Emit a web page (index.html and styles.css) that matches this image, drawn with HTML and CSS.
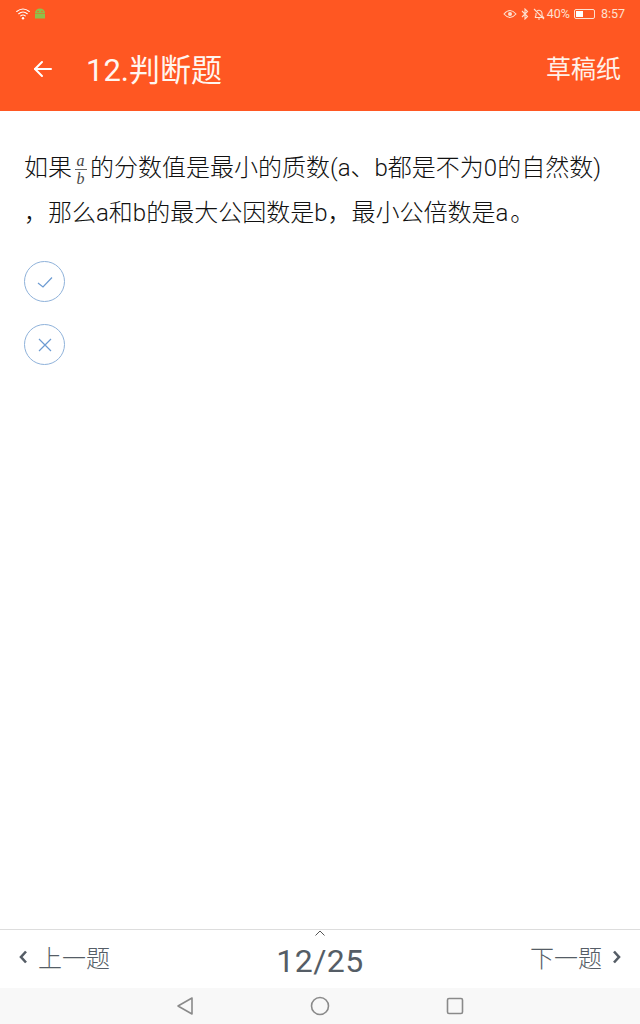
FILE: index.html
```html
<!DOCTYPE html>
<html lang="zh">
<head>
<meta charset="utf-8">
<title>12.判断题</title>
<link rel="stylesheet" href="styles.css">
</head>
<body>
<div class="page">
  <header class="top">
    <div class="status">
      <div class="status-left">
        <svg class="wifi" width="14" height="12" viewBox="0 0 14 12" fill="none" stroke="#fff" stroke-width="1.100" stroke-linecap="round"><path d="M.7 3.500 Q7 -1.500 13.300 3.500"/><path d="M2.700 5.700 Q7 2.400 11.300 5.700"/><path d="M4.700 7.900 Q7 6.200 9.300 7.900"/><circle cx="7" cy="10.200" r="1.200" fill="#fff" stroke="none"/></svg>
        <svg class="droid" width="12" height="12" viewBox="0 0 12 12"><path d="M1 5 A5 4.500 0 0 1 11 5 V10.500 H1Z" fill="#8fc04a"/><path d="M1 5.500 H11" stroke="#ff5722" stroke-width=".5"/><circle cx="4" cy="3.500" r=".7" fill="#ff5722"/><circle cx="8" cy="3.500" r=".7" fill="#ff5722"/></svg>
      </div>
      <div class="status-right">
        <svg width="14" height="10" viewBox="0 0 14 10" fill="none" stroke="#fde0d0" stroke-width="1.100"><path d="M1 5 Q7 -2 13 5 Q7 12 1 5Z"/><circle cx="7" cy="5" r="2" fill="#fde0d0" stroke="none"/></svg>
        <svg width="8" height="12" viewBox="0 0 8 12" fill="none" stroke="#fde0d0" stroke-width="1.100"><path d="M1 3 L6.500 8.500 L4 11 V1 L6.500 3.500 L1 9"/></svg>
        <svg width="12" height="12" viewBox="0 0 12 12" fill="none" stroke="#fde0d0" stroke-width="1.100"><path d="M2 9.500 H10.500 L9 7.500 V5 A3 3 0 0 0 4 3"/><path d="M3 5 V7.500 L2 9.500"/><path d="M5 11 H7"/><path d="M1 1 L11 11"/></svg>
        <span class="pct">40%</span>
        <span class="battery"><span class="battery-fill"></span></span>
        <span class="clock">8:57</span>
      </div>
    </div>
    <div class="appbar">
      <svg class="back" width="20" height="18" viewBox="0 0 20 18" fill="none" stroke="#fff" stroke-width="2" stroke-linecap="round" stroke-linejoin="round"><path d="M18 9 H2"/><path d="M9 2 L2 9 L9 16"/></svg>
      <h1 class="title">12.判断题</h1>
      <span class="draft">草稿纸</span>
    </div>
  </header>

  <main class="content">
    <div class="question">
      <p class="line">如果<span class="frac"><i class="num">a</i><i class="den">b</i></span>的分数值是最小的质数(a、b都是不为0的自然数)</p>
      <p class="line">，那么a和b的最大公因数是b，最小公倍数是a<span class="stop">。</span></p>
    </div>
    <div class="options">
      <div class="option">
        <svg width="18" height="18" viewBox="0 0 18 18" fill="none" stroke="#6c9bd2" stroke-width="1.200"><path d="M2 10 L7 14 L16 4.500"/></svg>
      </div>
      <div class="option">
        <svg width="16" height="16" viewBox="0 0 16 16" fill="none" stroke="#6c9bd2" stroke-width="1.200"><path d="M2 2 L14 14 M14 2 L2 14"/></svg>
      </div>
    </div>
  </main>

  <footer class="pager">
    <div class="pager-side">
      <svg width="10" height="14" viewBox="0 0 10 14" fill="none" stroke="#555d66" stroke-width="2.600"><path d="M8 1.500 L3 7 L8 12.500"/></svg>
      <span>上一题</span>
    </div>
    <div class="count">12/25</div>
    <div class="pager-side pager-next">
      <span>下一题</span>
      <svg width="10" height="14" viewBox="0 0 10 14" fill="none" stroke="#555d66" stroke-width="2.600"><path d="M2 1.500 L7 7 L2 12.500"/></svg>
    </div>
    <svg class="caret" width="12" height="6" viewBox="0 0 12 6" fill="none" stroke="#555" stroke-width="1"><path d="M1.500 5.500 L6 1 L10.500 5.500"/></svg>
  </footer>

  <nav class="softkeys">
    <svg width="18" height="20" viewBox="0 0 18 20" fill="none" stroke="#8a8a8a" stroke-width="1.600" stroke-linejoin="round"><path d="M16 2 V18 L2 10Z"/></svg>
    <svg width="20" height="20" viewBox="0 0 20 20" fill="none" stroke="#8a8a8a" stroke-width="1.600"><circle cx="10" cy="10" r="8.500"/></svg>
    <svg width="18" height="18" viewBox="0 0 18 18" fill="none" stroke="#8a8a8a" stroke-width="1.600"><rect x="1.500" y="1.500" width="15" height="15" rx="1.500"/></svg>
  </nav>
</div>
</body>
</html>
```

FILE: styles.css
```css
* { box-sizing: border-box; }
html, body { margin: 0; padding: 0; }
body {
  width: 640px;
  height: 1024px;
  background: #fff;
  overflow: hidden;
  font-family: Roboto, "Noto Sans CJK SC", sans-serif;
}
.page { display: flex; flex-direction: column; height: 1024px; }

.top { height: 111px; background: #ff5722; color: #fff; display: flex; flex-direction: column; flex: none; }
.status { height: 27px; display: flex; justify-content: space-between; align-items: center; padding: 0 15px 0 16px; }
.status-left { display: flex; align-items: center; gap: 4px; }
.status-right { display: flex; align-items: center; gap: 4px; color: #fde0d0; font-size: 12.500px; }
.pct { margin-left: -2px; }
.battery { width: 21px; height: 10px; border: 1px solid #fde0d0; border-radius: 2px; padding: 1px; margin: 0 2px 0 0; display: flex; }
.battery-fill { width: 7px; background: #fff; }
.clock { margin-left: 0; }

.appbar { flex: 1; display: flex; align-items: center; padding: 0 19px 0 33px; margin-top: 1px; }
.back { flex: none; margin-top: -2px; }
.title { margin: 2px 0 0 33px; font-size: 31px; font-weight: 400; flex: 1; line-height: 40px; color: #fff6f0; }
.draft { font-size: 25px; color: #fff0e8; margin-top: -5px; }

.content { flex: 1; padding: 35px 24px 0; }
.question { color: #111; font-size: 24px; font-weight: 300; }
.line { margin: 0; height: 45px; line-height: 45px; white-space: nowrap; }
.stop { margin-left: 2px; }
.frac { display: inline-flex; flex-direction: column; align-items: center; width: 15px; margin: 0 2px 0 1px; vertical-align: middle; font-family: "Liberation Serif", serif; font-size: 16px; line-height: 16px; color: #444; }
.num { border-bottom: 1px solid #666; padding: 0 2px; line-height: 16px; }
.den { line-height: 17px; }

.options { display: flex; flex-direction: column; gap: 22px; margin-top: 25px; }
.option { width: 41px; height: 41px; border: 1px solid #8fb2da; border-radius: 50%; display: flex; align-items: center; justify-content: center; }

.pager { position: relative; flex: none; height: 59px; border-top: 1px solid #ddd; display: flex; justify-content: space-between; align-items: center; padding: 0 18px; color: #555d66; }
.pager-side { display: flex; align-items: center; gap: 10px; font-size: 24px; font-weight: 300; width: 102px; margin-top: -5px; }
.pager-next { justify-content: flex-end; gap: 10px; }
.count { font-size: 32px; color: #555d66; letter-spacing: .5px; margin-top: 3px; }
.caret { position: absolute; left: 314px; top: 0; }

.softkeys { flex: none; height: 36px; background: #f8f8f8; display: flex; justify-content: center; align-items: center; gap: 116px; }
```
